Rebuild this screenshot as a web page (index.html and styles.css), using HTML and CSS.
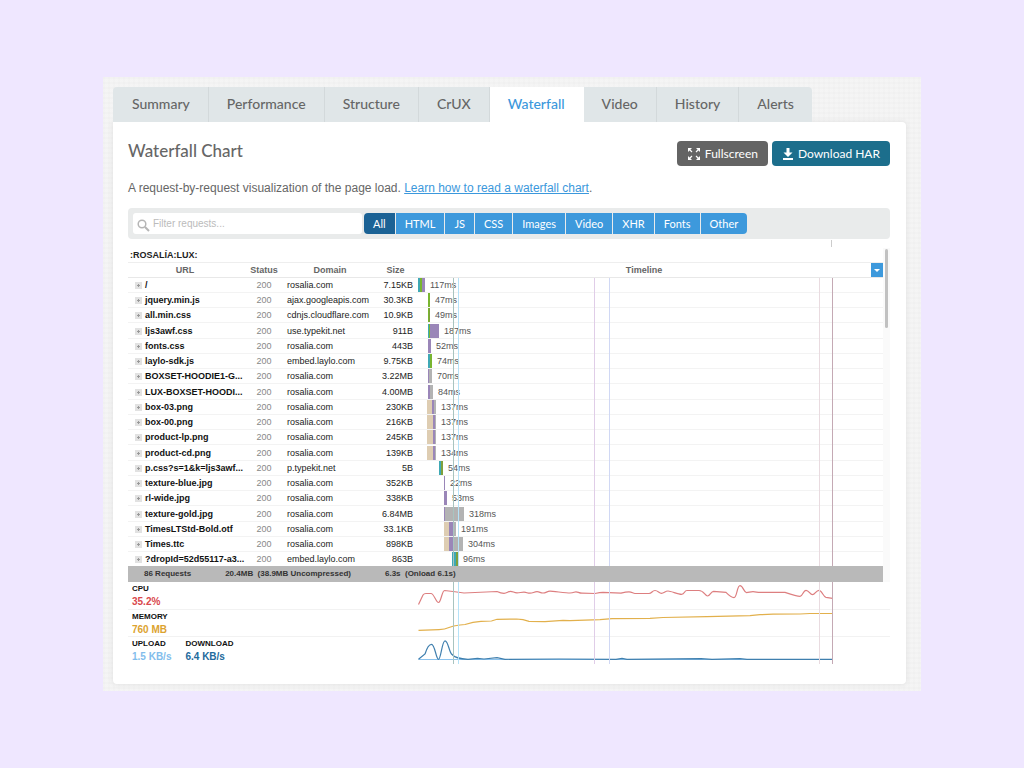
FILE: index.html
```html
<!DOCTYPE html>
<html lang="en">
<head>
  <meta charset="UTF-8">
  <meta name="viewport" content="width=device-width, initial-scale=1.0">
  <title>Waterfall Chart</title>
  <link rel="stylesheet" href="styles.css">
</head>
<body>
  <div class="page">
    <nav class="tabs">
      <a href="#summary">Summary</a>
      <a href="#performance">Performance</a>
      <a href="#structure">Structure</a>
      <a href="#crux">CrUX</a>
      <a href="#waterfall" class="active">Waterfall</a>
      <a href="#video">Video</a>
      <a href="#history">History</a>
      <a href="#alerts">Alerts</a>
    </nav>
    <main class="panel">
      <div class="panel-head">
        <h1>Waterfall Chart</h1>
        <div class="actions">
          <button class="btn btn-gray" type="button">
            <svg width="14" height="14" viewBox="0 0 14 14" fill="#fff" stroke="#fff" stroke-width="1.2"><path stroke="none" d="M1 1h4L1 5zM13 1v4L9 1zM1 13V9l4 4zM13 13H9l4-4z"/><path d="M2 2l3 3M12 2L9 5M2 12l3-3M12 12L9 9"/></svg>
            Fullscreen
          </button>
          <button class="btn btn-teal" type="button">
            <svg width="12" height="14" viewBox="0 0 12 14" fill="#fff"><path d="M4.500 1h3v4.500h3L6 10 1.500 5.500h3zM1 11h10v2H1z"/></svg>
            Download HAR
          </button>
        </div>
      </div>
      <p class="intro">A request-by-request visualization of the page load. <a href="#learn">Learn how to read a waterfall chart</a>.</p>

      <div class="toolbar">
        <label class="search">
          <svg width="13" height="13" viewBox="0 0 13 13" fill="none" stroke="#b5b5b5"><circle cx="5" cy="5" r="3.800" stroke-width="1.500"/><path d="M8 8l4 4" stroke-width="2"/></svg>
          <input type="text" placeholder="Filter requests..." aria-label="Filter requests">
        </label>
        <div class="filters">
          <button type="button" class="active">All</button>
          <button type="button">HTML</button>
          <button type="button">JS</button>
          <button type="button">CSS</button>
          <button type="button">Images</button>
          <button type="button">Video</button>
          <button type="button">XHR</button>
          <button type="button">Fonts</button>
          <button type="button">Other</button>
        </div>
      </div>

      <div class="waterfall">
        <div class="requests">
          <div class="page-name">:ROSALÍA:LUX:</div>
          <table>
            <colgroup><col class="c-url"><col class="c-status"><col class="c-domain"><col class="c-size"><col><col class="c-menu"></colgroup>
            <thead>
              <tr><th>URL</th><th>Status</th><th>Domain</th><th>Size</th><th>Timeline</th><th><button type="button" class="menu" aria-label="Columns"></button></th></tr>
            </thead>
            <tbody>
              <tr><td class="url"><i></i>/</td><td class="status">200</td><td>rosalia.com</td><td class="size">7.15KB</td><td colspan="2"><div class="bar" style="margin-left:1px"><b class="dns" style="width:2px"></b><b class="connect" style="width:2px"></b><b class="wait" style="width:3px"></b><span>117ms</span></div></td></tr>
              <tr><td class="url"><i></i>jquery.min.js</td><td class="status">200</td><td>ajax.googleapis.com</td><td class="size">30.3KB</td><td colspan="2"><div class="bar" style="margin-left:11px"><b class="connect" style="width:2px"></b><span>47ms</span></div></td></tr>
              <tr><td class="url"><i></i>all.min.css</td><td class="status">200</td><td>cdnjs.cloudflare.com</td><td class="size">10.9KB</td><td colspan="2"><div class="bar" style="margin-left:11px"><b class="connect" style="width:1px"></b><b class="ssl" style="width:1px"></b><span>49ms</span></div></td></tr>
              <tr><td class="url"><i></i>ljs3awf.css</td><td class="status">200</td><td>use.typekit.net</td><td class="size">911B</td><td colspan="2"><div class="bar" style="margin-left:11px"><b class="dns" style="width:1px"></b><b class="connect" style="width:1px"></b><b class="wait" style="width:9px"></b><span>187ms</span></div></td></tr>
              <tr><td class="url"><i></i>fonts.css</td><td class="status">200</td><td>rosalia.com</td><td class="size">443B</td><td colspan="2"><div class="bar" style="margin-left:11px"><b class="wait" style="width:3px"></b><span>52ms</span></div></td></tr>
              <tr><td class="url"><i></i>laylo-sdk.js</td><td class="status">200</td><td>embed.laylo.com</td><td class="size">9.75KB</td><td colspan="2"><div class="bar" style="margin-left:11px"><b class="dns" style="width:2px"></b><b class="connect" style="width:2px"></b><span>74ms</span></div></td></tr>
              <tr><td class="url"><i></i>BOXSET-HOODIE1-G...</td><td class="status">200</td><td>rosalia.com</td><td class="size">3.22MB</td><td colspan="2"><div class="bar" style="margin-left:11px"><b class="wait" style="width:1px"></b><b class="receive" style="width:3px"></b><span>70ms</span></div></td></tr>
              <tr><td class="url"><i></i>LUX-BOXSET-HOODI...</td><td class="status">200</td><td>rosalia.com</td><td class="size">4.00MB</td><td colspan="2"><div class="bar" style="margin-left:11px"><b class="wait" style="width:2px"></b><b class="receive" style="width:3px"></b><span>84ms</span></div></td></tr>
              <tr><td class="url"><i></i>box-03.png</td><td class="status">200</td><td>rosalia.com</td><td class="size">230KB</td><td colspan="2"><div class="bar" style="margin-left:10px"><b class="block" style="width:5px"></b><b class="wait" style="width:2px"></b><b class="receive" style="width:2px"></b><span>137ms</span></div></td></tr>
              <tr><td class="url"><i></i>box-00.png</td><td class="status">200</td><td>rosalia.com</td><td class="size">216KB</td><td colspan="2"><div class="bar" style="margin-left:10px"><b class="block" style="width:6px"></b><b class="wait" style="width:2px"></b><b class="receive" style="width:1px"></b><span>137ms</span></div></td></tr>
              <tr><td class="url"><i></i>product-lp.png</td><td class="status">200</td><td>rosalia.com</td><td class="size">245KB</td><td colspan="2"><div class="bar" style="margin-left:10px"><b class="block" style="width:6px"></b><b class="wait" style="width:2px"></b><b class="receive" style="width:1px"></b><span>137ms</span></div></td></tr>
              <tr><td class="url"><i></i>product-cd.png</td><td class="status">200</td><td>rosalia.com</td><td class="size">139KB</td><td colspan="2"><div class="bar" style="margin-left:10px"><b class="block" style="width:6px"></b><b class="wait" style="width:2px"></b><b class="receive" style="width:1px"></b><span>134ms</span></div></td></tr>
              <tr><td class="url"><i></i>p.css?s=1&amp;k=ljs3awf...</td><td class="status">200</td><td>p.typekit.net</td><td class="size">5B</td><td colspan="2"><div class="bar" style="margin-left:22px"><b class="dns" style="width:2px"></b><b class="ssl" style="width:2px"></b><span>54ms</span></div></td></tr>
              <tr><td class="url"><i></i>texture-blue.jpg</td><td class="status">200</td><td>rosalia.com</td><td class="size">352KB</td><td colspan="2"><div class="bar" style="margin-left:27px"><b class="wait" style="width:1px"></b><span>22ms</span></div></td></tr>
              <tr><td class="url"><i></i>rl-wide.jpg</td><td class="status">200</td><td>rosalia.com</td><td class="size">338KB</td><td colspan="2"><div class="bar" style="margin-left:27px"><b class="wait" style="width:3px"></b><span>53ms</span></div></td></tr>
              <tr><td class="url"><i></i>texture-gold.jpg</td><td class="status">200</td><td>rosalia.com</td><td class="size">6.84MB</td><td colspan="2"><div class="bar" style="margin-left:27px"><b class="wait" style="width:1px"></b><b class="receive" style="width:19px"></b><span>318ms</span></div></td></tr>
              <tr><td class="url"><i></i>TimesLTStd-Bold.otf</td><td class="status">200</td><td>rosalia.com</td><td class="size">33.1KB</td><td colspan="2"><div class="bar" style="margin-left:27px"><b class="block" style="width:5px"></b><b class="wait" style="width:4px"></b><b class="receive" style="width:3px"></b><span>191ms</span></div></td></tr>
              <tr><td class="url"><i></i>Times.ttc</td><td class="status">200</td><td>rosalia.com</td><td class="size">898KB</td><td colspan="2"><div class="bar" style="margin-left:27px"><b class="block" style="width:5px"></b><b class="wait" style="width:4px"></b><b class="receive" style="width:10px"></b><span>304ms</span></div></td></tr>
              <tr><td class="url"><i></i>?dropId=52d55117-a3...</td><td class="status">200</td><td>embed.laylo.com</td><td class="size">863B</td><td colspan="2"><div class="bar" style="margin-left:35px"><b class="dns" style="width:4px"></b><b class="ssl" style="width:2px"></b><span>96ms</span></div></td></tr>
            </tbody>
          </table>
          <div class="totals"><span>86 Requests</span><span>20.4MB&nbsp; (38.9MB Uncompressed)</span><span>6.3s&nbsp; (Onload 6.1s)</span></div>
        </div>
        <div class="scrollbar"><div class="thumb"></div></div>

        <div class="graphs">
          <div class="legend">
            <dl><div><dt>CPU</dt><dd class="cpu">35.2%</dd></div></dl>
            <dl><div><dt>MEMORY</dt><dd class="memory">760 MB</dd></div></dl>
            <dl><div><dt>UPLOAD</dt><dd class="upload">1.5 KB/s</dd></div><div><dt>DOWNLOAD</dt><dd class="download">6.4 KB/s</dd></div></dl>
          </div>
          <svg class="lines" viewBox="0 0 473 82" preserveAspectRatio="none">
            <path stroke="#f2f2f2" stroke-width="1" d="M0 27.500H473M0 54.500H473"/>
            <path stroke="#dd7f80" d="M1.500 22.500L6 13Q7 11.500 9 11.500H14C17 11.500 19 20.500 21.500 20.500S25 8.500 27.500 8.500L36 9.500L47 11L80 9.500S84 11.300 87 11.300S91 9.300 93.500 9.300S97 10.800 100 10.800S104 10.200 107 10.200S110 11.200 113 11.200S117 9.700 120 9.700S123 11 126 11S130 9.200 133 9.200S149 11 153 11S157 9.800 159 9.800S162 11.200 165 11.200L178 11.500S183 10.400 186 10.400L204 11.200S209 9.800 212 9.800S216 11.500 218 11.500H232C235 11.500 235 8.500 238 8.500S242 11.300 244.500 11.300S248 9 251 9S261 12.300 264.500 12.300S267 8.500 270 8.500H282C287 8.500 288 14 290.500 14S294 9.300 296.500 9.300L309 10.400S314 15.600 317 15.600S320 3.700 323 3.700S327 10.600 329.500 10.600S333 9.700 336 9.700S340 10.400 343 10.400H368S380 14.300 383 14.300S386 8.400 389 8.400S393 12.700 395.500 12.700S399 8.400 402 8.400S406 14.700 409 15.300L415.500 16.300"/>
            <path stroke="#e2b04c" d="M1.500 48.300L22 47.600Q28 47.300 32 45.500T43 43L48 42.500Q56 39.500 64 39.300L74.500 39L80 37.300L99.500 37L106 37.700L112 39.300L128 39.600L146 38.300L153 38.600L183 37.600L195 36.700L233 36.300L246 35.500L290 34.600L333 33.700L343 32.700L356 32.200L383 32L393 31.500H415.500"/>
            <path stroke="#8cc3ee" d="M1.500 77.500H415.500"/>
            <path stroke="#3f7fae" d="M1.500 77.300L8 72Q11 62.300 14.500 62.300C18 62.300 19 77.300 21.500 77.300S25 58.800 28 58.800S32 69 34.500 72S42 77 51 77.300L60.500 76.300L67 77L80 75.700L88 77.300L142 77L199 77.300L205 76.400L210 77.300L284 76.700L295 77.300L323 76.700L330 77.300H415.500"/>
          </svg>
        </div>

        <!-- page timing markers, drawn across the rows and the graphs -->
        <div class="markers">
          <i class="ttfb"></i><i class="fcp"></i><i class="lcp"></i><i class="dom"></i><i class="onload"></i><i class="loaded"></i>
        </div>
        <i class="tick"></i>
      </div>
    </main>
  </div>
</body>
</html>
```
FILE: styles.css
```css
* { box-sizing: border-box; }
body { margin: 0; padding: 77px 103px; background: #efe7ff; font-family: "Liberation Sans", Arial, sans-serif; color: #666; }
a { color: #3b98dc; }
button { font-family: Lato, "Open Sans", sans-serif; border: none; cursor: pointer; }

.page { padding: 10px 15px 7px 10px; background: repeating-linear-gradient(90deg, #f1f1f180 0 2px, #f5f5f580 2px 5px), repeating-linear-gradient(#efefef 0 2px, #f4f4f4 2px 5px); }

.tabs { display: flex; }
.tabs a { padding: 0 18px; height: 35px; background: #e0e6e8; border-right: 1px solid #d3d9db; color: #666; font: 500 14px/34px Lato, "Open Sans", sans-serif; text-decoration: none; }
.tabs a:first-child { padding-left: 19px; border-radius: 4px 0 0 0; }
.tabs a:last-child { border-radius: 0 4px 0 0; border-right: none; }
.tabs a.active { background: #fff; border-color: #fff; color: #3b98dc; }

.panel { padding: 19px 16px 20px 15px; background: #fff; border-radius: 0 4px 4px 4px; box-shadow: 0 0 5px #ddd; }
.panel-head { display: flex; justify-content: space-between; align-items: center; }
h1 { margin: 0; font: 500 17px/20px Lato, "Open Sans", sans-serif; padding-bottom: 5px; }
.actions { display: flex; gap: 4px; }
.btn { display: flex; align-items: center; justify-content: center; gap: 4px; height: 25px; padding: 0 10px; border-radius: 4px; color: #fff; font-size: 12px; }
.btn-gray { background: #646464; }
.btn-teal { background: #1c6e8c; }

.intro { margin: 14px 0 12px; font-size: 12px; line-height: 16px; }

.toolbar { display: flex; gap: 2px; padding: 5px; height: 31px; background: #e9ebeb; border-radius: 4px; }
.search { display: flex; align-items: center; gap: 3px; width: 229px; padding: 0 4px; background: #fff; border-radius: 3px; }
.search svg { margin-top: 3px; }
.search input { flex: 1; min-width: 0; padding: 0; border: none; outline: none; font: 10px "Liberation Sans", Arial, sans-serif; }
.search input::placeholder { color: #bbb; }
.filters { display: flex; gap: 1px; border-radius: 4px; overflow: hidden; }
.filters button { padding: 0 9px; background: #3d99dc; color: #fff; font-size: 11px; }
.filters .active { background: #1b6295; }

.waterfall { position: relative; display: grid; grid-template-columns: 1fr 7px; margin-top: 9px; font-size: 9px; }
.page-name { padding-left: 2px; height: 14px; line-height: 14px; color: #222; font-weight: bold; }
.requests { min-width: 0; }
.requests table { width: 100%; table-layout: fixed; border-collapse: separate; border-spacing: 0; border-top: 1px solid #eee; }
.c-url { width: 114px; }
.c-status { width: 44px; }
.c-domain { width: 88px; }
.c-size { width: 43px; }
.c-menu { width: 12px; }
.requests th { height: 15px; padding: 0; border-bottom: 1px solid #e8e8e8; }
.requests td { height: 15px; padding: 0 1px; border-bottom: 1px solid #f3f3f3; color: #222; line-height: 10px; white-space: nowrap; }
.requests tr:nth-child(4n) td { height: 16px; }
.requests td[colspan] { padding: 0; }
.requests .url { padding-left: 7px; color: #111; font-weight: bold; }
.url i { display: inline-block; width: 7px; height: 7px; margin-right: 3px; vertical-align: -1px; background: linear-gradient(#999, #999) center / 3px 1px no-repeat, linear-gradient(#999, #999) center / 1px 3px no-repeat, #e2e2e2; }
.requests .status { color: #888; text-align: center; }
.requests .size { padding-right: 4px; text-align: right; }
.menu { display: block; width: 12px; height: 14px; padding: 0; background: #3d99dc; }
.menu::before { content: ""; display: block; width: 0; margin: 0 auto; border: 3px solid transparent; border-top-color: #fff; border-bottom: none; }

.bar { display: flex; height: 14px; align-items: stretch; }
.bar span { padding-left: 5px; color: #555; line-height: 14px; }
.dns { background: #3fa9b5; }
.connect { background: #79b530; }
.ssl { background: #7fa03c; }
.wait { background: #9a86b8; }
.receive { background: #b3b3b3; }
.block { background: #decdb2; }

.totals { position: relative; z-index: 2; display: flex; gap: 34px; height: 16px; margin-top: -1px; padding-left: 16px; background: #b9b9b9; color: #333; font-size: 8px; font-weight: bold; line-height: 16px; }
.scrollbar { padding: 1px 2px; background: #fafafa; }
.thumb { height: 79px; border-radius: 3px; background: #c1c1c1; }

.graphs { grid-column: 1 / 3; display: flex; }
.legend { width: 289px; }
.legend dl { display: flex; gap: 14px; height: 27px; margin: 0; padding-left: 4px; border-bottom: 1px solid #f2f2f2; font-weight: bold; }
.legend dl:first-child { height: 28px; }
.legend dl:last-child { border: none; }
.legend dt { color: #111; font-size: 8px; line-height: 14px; }
.legend dd { margin: 0; font-size: 10px; line-height: 12px; }
.cpu { color: #d9484c; }
.memory { color: #dca32f; }
.upload { color: #82bdec; }
.download { color: #236a9c; }
.lines { flex: 1; min-width: 0; height: 82px; fill: none; stroke-width: 1.2; }

.markers { position: absolute; z-index: 1; top: 30px; bottom: 0; left: 289px; right: 7px; }
.markers i, .tick { position: absolute; top: 0; bottom: 0; width: 1px; }
.ttfb { left: 7.8%; background: #a8c4c0; }
.fcp { left: 8.8%; background: #b5e2f8; }
.lcp { left: 38%; background: #e0cde8; }
.dom { left: 41.2%; background: #d0d8f4; }
.onload { left: 86.2%; background: #e9dbe0; }
.loaded { left: 89%; background: #c4a9b4; }
.tick { top: -8px; right: 58px; bottom: auto; height: 7px; background: #ccc; }
```
